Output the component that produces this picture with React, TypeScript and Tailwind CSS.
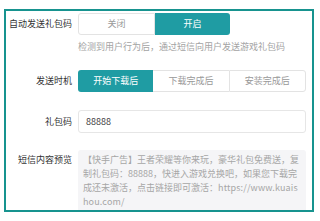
const font = { fontFamily: '"Noto Sans CJK SC", "Noto Sans", sans-serif' };

const labelCls = 'w-[66px] shrink-0 whitespace-nowrap text-right text-[9px] leading-[12px] text-[#333]';

export default function App() {
  return (
    <div className="h-[221px] w-[320px] bg-white pl-[4px] pt-[9px]" style={font}>
      <div className="h-[203px] w-[310px] overflow-hidden border-2 border-[#17938f] pt-[2px]">
        {/* 自动发送礼包码 */}
        <div className="flex items-center gap-[6px]">
          <div className={labelCls}>自动发送礼包码</div>
          <div className="flex h-[22px] w-[152px] text-[9px]">
            <button className="flex-1 rounded-l-[3px] border border-[#e3e3e3] bg-white text-[#999]">关闭</button>
            <button className="flex-1 rounded-r-[3px] bg-[#1f9ca3] text-white">开启</button>
          </div>
        </div>
        <div className="ml-[72px] mt-[6px] text-[9px] leading-[12px] text-[#a3a3a3]">
          检测到用户行为后，通过短信向用户发送游戏礼包码
        </div>

        {/* 发送时机 */}
        <div className="mt-[17px] flex items-center gap-[6px]">
          <div className={labelCls}>发送时机</div>
          <div className="flex h-[22px] w-[228px] text-[9px]">
            <button className="flex-1 rounded-l-[3px] bg-[#1f9ca3] text-white">开始下载后</button>
            <button className="flex-1 border-y border-[#e3e3e3] bg-white text-[#999]">下载完成后</button>
            <button className="flex-1 rounded-r-[3px] border border-[#e3e3e3] bg-white text-[#999]">安装完成后</button>
          </div>
        </div>

        {/* 礼包码 */}
        <div className="mt-[18px] flex items-center gap-[6px]">
          <div className={labelCls}>礼包码</div>
          <div className="flex h-[23px] w-[228px] items-center rounded-[3px] border border-[#e6e6e6] px-[7px] text-[9px] text-[#444]">
            88888
          </div>
        </div>

        {/* 短信内容预览 */}
        <div className="mt-[17px] flex items-start gap-[6px]">
          <div className={labelCls + ' mt-[4px]'}>短信内容预览</div>
          <div className="w-[228px] break-all rounded-[3px] bg-[#f5f5f7] px-[5px] pb-[6px] pt-[3px] text-[9px] leading-[14px] text-[#a6a6a6]">
            【快手广告】王者荣耀等你来玩，豪华礼包免费送，复制礼包码：88888，快进入游戏兑换吧，如果您下载完成还未激活，点击链接即可激活：<span className="tracking-[0.15px]">https://www.kuaishou.com/</span>
          </div>
        </div>
      </div>
    </div>
  );
}
